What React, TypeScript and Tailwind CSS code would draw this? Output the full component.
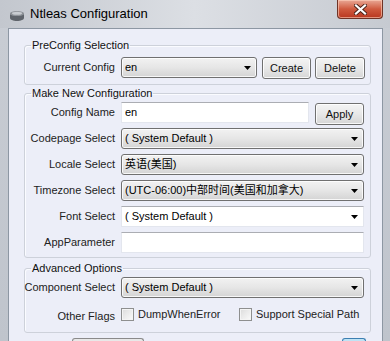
import { ReactNode } from 'react';

const font = { fontFamily: '"Liberation Sans", "Noto Sans CJK SC", Arial, sans-serif' };

function Arrow() {
  return (
    <svg width="7" height="4" viewBox="0 0 7 4" className="shrink-0">
      <path d="M0 0h7L3.5 4z" fill="#000" />
    </svg>
  );
}

// Win7 style dropdown list (gradient face)
function Combo({ value, w = 'w-[243px]' }: { value: string; w?: string }) {
  return (
    <div className={`${w} h-[21px] rounded-[3px] border border-[#707070] bg-gradient-to-b from-[#f2f2f2] via-[#e6e6e6] to-[#d4d4d4] shadow-[inset_0_0_0_1px_rgba(255,255,255,0.8)] flex items-center pl-[3px] pr-[5px]`}>
      <span className="flex-1 truncate text-black">{value}</span>
      <Arrow />
    </div>
  );
}

// editable combo / text box (white)
function Edit({ value = '', w = 'w-[243px]', arrow = false }: { value?: string; w?: string; arrow?: boolean }) {
  return (
    <div className={`${w} h-[21px] bg-white border border-[#e3e6ee] border-t-[#abadb3] flex items-center pl-[3px] pr-[5px]`}>
      <span className="flex-1 truncate text-black">{value}</span>
      {arrow && <Arrow />}
    </div>
  );
}

function Btn({ children, w }: { children: ReactNode; w: string }) {
  return (
    <div className={`${w} h-[22px] rounded-[3px] border border-[#707070] bg-gradient-to-b from-[#f4f4f4] via-[#e8e8e8] to-[#d6d6d6] shadow-[inset_0_0_0_1px_rgba(255,255,255,0.85)] flex items-center justify-center text-[#111]`}>
      {children}
    </div>
  );
}

function Row({ label, children, className = '' }: { label: string; children: ReactNode; className?: string }) {
  return (
    <div className={`h-[22px] flex items-start gap-[6px] ${className}`}>
      <div className="w-[90px] h-[21px] flex items-center justify-end text-[#222] whitespace-nowrap">{label}</div>
      {children}
    </div>
  );
}

function Group({ title, children, className = '' }: { title: string; children: ReactNode; className?: string }) {
  return (
    <fieldset className={`mx-0 ml-[15px] w-[347px] rounded-[3px] border border-[#cdd1da] shadow-[inset_1px_1px_0_#fafbff] pr-[5px] ${className}`}>
      <legend className="ml-[6px] px-[1px] h-[13px] leading-[13px] text-[#111]">{title}</legend>
      {children}
    </fieldset>
  );
}

function Check({ label }: { label: string }) {
  return (
    <div className="flex items-center gap-[4px]">
      <div className="w-[13px] h-[13px] border border-[#8e8f8f] bg-gradient-to-br from-[#dcdcdc] to-[#fbfbfb] shadow-[inset_0_0_0_1px_#f4f4f4]" />
      <span className="text-[#222] whitespace-nowrap">{label}</span>
    </div>
  );
}

export default function App() {
  return (
    <div style={font} className="w-[390px] h-[341px] overflow-hidden text-[11px] bg-gradient-to-b from-[#c9cdd4] to-[#bfc4cc] flex flex-col relative">
      {/* title bar */}
      <div className="h-[28px] shrink-0 flex items-start bg-gradient-to-r from-[#c3c7ce] via-[#dcdfe4] to-[#c6cad1]">
        <div className="mt-[10px] ml-[8px] w-[18px] h-[12px]">
          <svg width="18" height="12" viewBox="0 0 18 12">
            <ellipse cx="9" cy="3.5" rx="7" ry="2.5" fill="#8c9096" />
            <path d="M2 3.5v4.5c0 1.6 3.1 3 7 3s7-1.4 7-3V3.5c0 1.4-3.1 2.5-7 2.5S2 4.9 2 3.5z" fill="#5f646b" />
            <ellipse cx="9" cy="3.3" rx="5" ry="1.5" fill="#c8ccd1" />
          </svg>
        </div>
        <div className="ml-[4px] mt-[6px] text-[13px] leading-[16px] text-black">Ntleas Configuration</div>
        <div className="ml-auto mr-[7px] w-[46px] h-[19px] rounded-b-[4px] border border-t-0 border-[#6e3326] bg-gradient-to-b from-[#e8a795] via-[#cf5a3f] to-[#b8361e] shadow-[inset_0_0_0_1px_rgba(255,210,190,0.6)] flex items-center justify-center">
          <svg width="13" height="11" viewBox="0 0 13 11">
            <path d="M2 1.5l9 8M11 1.5l-9 8" stroke="#4a2218" strokeWidth="4" strokeLinecap="square" />
            <path d="M2 1.5l9 8M11 1.5l-9 8" stroke="#fff" strokeWidth="2.2" strokeLinecap="square" />
          </svg>
        </div>
      </div>
      {/* client area */}
      <div className="flex-1 ml-[8px] mr-[7px] border border-b-0 border-[#8d97a3] bg-[#eceef8] flex flex-col">
        <Group title="PreConfig Selection" className="mt-[10px] pt-[5px] pb-[5px]">
          <Row label="Current Config">
            <Combo value="en" w="w-[136px]" />
            <div className="flex gap-[4px] -ml-[1px]">
              <Btn w="w-[49px]">Create</Btn>
              <Btn w="w-[50px]">Delete</Btn>
            </div>
          </Row>
        </Group>
        <Group title="Make New Configuration" className="mt-[2px] pt-[2px] pb-[3px]">
          <div className="flex flex-col gap-[4px]">
            <Row label="Config Name">
              <Edit value="en" w="w-[188px]" />
              <div className="mt-[1px]">
                <Btn w="w-[49px]">Apply</Btn>
              </div>
            </Row>
            <Row label="Codepage Select">
              <Combo value="( System Default )" />
            </Row>
            <Row label="Locale Select">
              <Combo value="英语(美国)" />
            </Row>
            <Row label="Timezone Select">
              <Combo value="(UTC-06:00)中部时间(美国和加拿大)" />
            </Row>
            <Row label="Font Select">
              <Edit value="( System Default )" arrow />
            </Row>
            <Row label="AppParameter">
              <Edit />
            </Row>
          </div>
        </Group>
        <Group title="Advanced Options" className="mt-[4px] pt-[2px] pb-[4px]">
          <Row label="Component Select">
            <Combo value="( System Default )" />
          </Row>
          <Row label="Other Flags" className="mt-[7px] items-center">
            <div className="flex items-center">
              <div className="w-[118px]">
                <Check label="DumpWhenError" />
              </div>
              <Check label="Support Special Path" />
            </div>
          </Row>
        </Group>
        <div className="mt-[5px] flex">
          <div className="ml-[63px] w-[72px] h-[10px] rounded-t-[3px] border border-b-0 border-[#8a8a8a] bg-[#e8e8e8]" />
          <div className="ml-auto mr-[16px] w-[24px] h-[10px] rounded-t-[3px] border border-b-0 border-[#3c7fb1] bg-[#bfe3f5]" />
        </div>
      </div>
    </div>
  );
}
